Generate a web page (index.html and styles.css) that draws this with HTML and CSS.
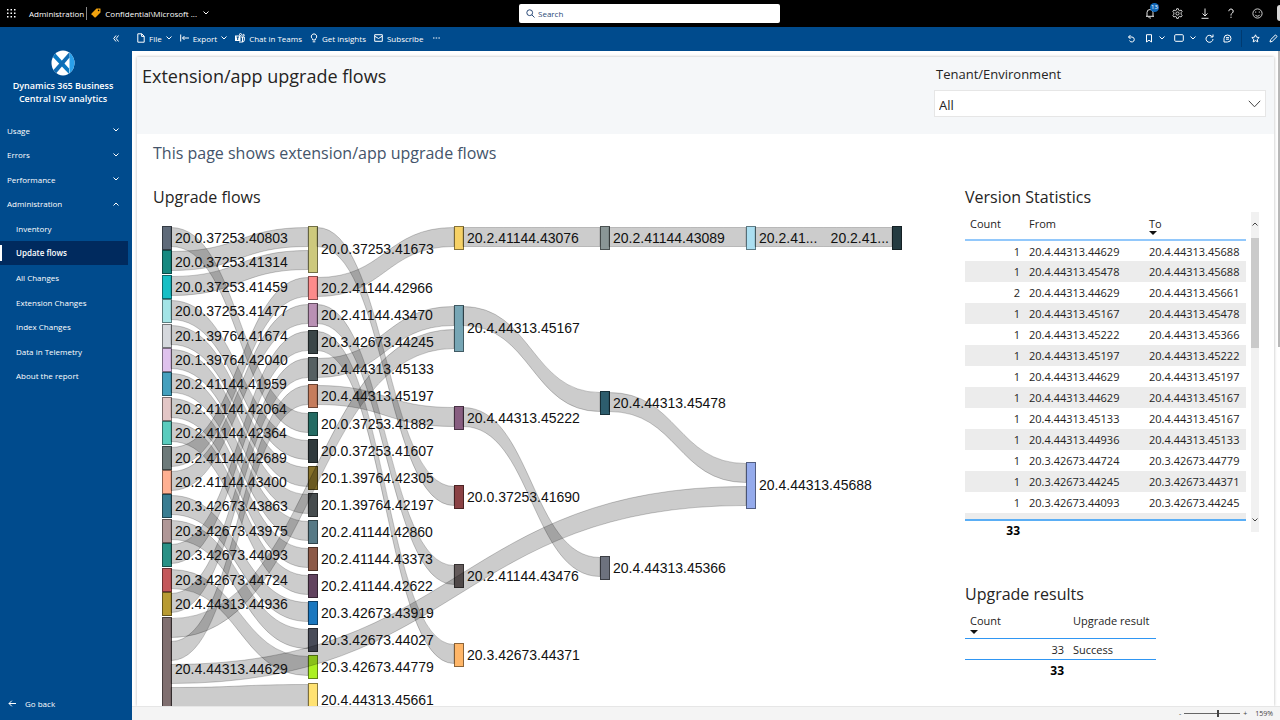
FILE: index.html
```html
<!DOCTYPE html>
<html lang="en">
<head>
<meta charset="utf-8">
<title>Extension/app upgrade flows</title>
<link rel="stylesheet" href="styles.css">
</head>
<body>
<div class="app">
  <header class="topbar">
    <div class="topbar-left">
      <button class="icon-btn" aria-label="Apps">
        <svg width="9" height="9" viewBox="0 0 9 9" fill="#fff"><path d="M0 0h1.500v1.500H0zM3.500 0H5v1.500H3.500zM7 0h1.500v1.500H7zM0 3.500h1.500V5H0zM3.500 3.500H5V5H3.500zM7 3.500h1.500V5H7zM0 7h1.500v1.500H0zM3.500 7H5v1.500H3.500zM7 7h1.500v1.500H7z"/></svg>
      </button>
      <span class="workspace">Administration</span>
      <span class="divider"></span>
      <button class="label-btn">
        <svg width="10" height="10" viewBox="0 0 10 10"><path d="M5.500.5H9.300L9.500 1v3.500L4.500 9.500h-.8L.5 6.300v-.8z" fill="#f2a30f"/><circle cx="7.600" cy="2.400" r=".8" fill="#000"/></svg>
        <span>Confidential\Microsoft ...</span>
        <svg class="chev" width="6" height="4" viewBox="0 0 6 4"><path d="M.5.5 3 3 5.500.5"/></svg>
      </button>
    </div>
    <label class="search">
      <svg width="9" height="9" viewBox="0 0 9 9" fill="none" stroke="#2b4a78"><circle cx="3.700" cy="3.700" r="2.900"/><path d="M5.800 5.800 8.500 8.500"/></svg>
      <input type="text" placeholder="Search" aria-label="Search">
    </label>
    <div class="topbar-right">
      <button class="icon-btn bell" aria-label="Notifications">
        <svg width="10" height="11" viewBox="0 0 10 11" fill="none" stroke="#fff" stroke-width=".9"><path d="M1 8.300h8M2 8.300V4.500a3 3 0 0 1 6 0v3.800M4 8.500a1 1 0 0 0 2 1"/></svg>
        <span class="badge">13</span>
      </button>
      <button class="icon-btn" aria-label="Settings">
        <svg width="11" height="11" viewBox="0 0 11 11" fill="none" stroke="#fff" stroke-width=".8"><path d="M4.700.7h1.600l.4 1.500 1 .5L9.100 2l1 1.500-1 1.200v1.500l1 1.200-1 1.600-1.400-.6-1 .5-.4 1.500H4.700l-.4-1.500-1-.5L1.900 9l-1-1.600 1-1.200V4.700l-1-1.200 1-1.500 1.400.7 1-.5z"/><circle cx="5.500" cy="5.500" r="1.600"/></svg>
      </button>
      <button class="icon-btn" aria-label="Download">
        <svg width="10" height="11" viewBox="0 0 10 11" fill="none" stroke="#fff" stroke-width=".9"><path d="M5 .5v7.300M2.500 5.500 5 8l2.500-2.500M1.500 10.300h7"/></svg>
      </button>
      <button class="icon-btn" aria-label="Help">
        <svg width="8" height="11" viewBox="0 0 8 11" fill="none" stroke="#fff" stroke-width="1"><path d="M1.800 3.200a2.200 2.200 0 1 1 3.500 1.800C4.300 5.800 4 6.200 4 7.500M4 8.700v1.200"/></svg>
      </button>
      <button class="icon-btn" aria-label="Feedback">
        <svg width="11" height="11" viewBox="0 0 11 11" fill="none" stroke="#fff" stroke-width=".8"><circle cx="5.500" cy="5.500" r="4.600"/><path d="M3.200 6.800a2.600 2.600 0 0 0 4.600 0M3.700 3.500v1.200M7.300 3.500v1.200"/></svg>
      </button>
      <span class="avatar"></span>
    </div>
  </header>

  <div class="shell">
    <aside class="sidebar">
      <button class="collapse" aria-label="Collapse navigation">
        <svg width="6" height="7" viewBox="0 0 6 7" fill="none" stroke="#fff"><path d="M3 .5.700 3.500 3 6.500M5.500.5 3.200 3.500 5.500 6.500"/></svg>
      </button>
      <div class="brand">
        <svg width="24" height="26" viewBox="0 0 24 26"><defs><clipPath id="logo"><ellipse cx="12" cy="13" rx="11.500" ry="12.500"/></clipPath></defs><g clip-path="url(#logo)"><path d="M0 0h24v26H0z" fill="#fff"/><path d="M16.500 0H24v26h-7.500l2-3V3z" fill="#2aa0ea"/><path d="M0 5 3 2 18 18.500V24z" fill="#0a78c2"/><path d="M18.500 2v5.500L5 23.500 2 20.500z" fill="#0f6cb4"/></g></svg>
        <h1>Dynamics 365 Business Central ISV analytics</h1>
      </div>
      <nav class="menu">
        <button class="group">Usage<svg class="chev" width="6" height="4" viewBox="0 0 6 4"><path d="M.5.5 3 3 5.500.5"/></svg></button>
        <button class="group">Errors<svg class="chev" width="6" height="4" viewBox="0 0 6 4"><path d="M.5.5 3 3 5.500.5"/></svg></button>
        <button class="group">Performance<svg class="chev" width="6" height="4" viewBox="0 0 6 4"><path d="M.5.5 3 3 5.500.5"/></svg></button>
        <button class="group">Administration<svg class="chev" width="6" height="4" viewBox="0 0 6 4"><path d="M.5 3.500 3 1l2.500 2.500"/></svg></button>
        <a href="#">Inventory</a>
        <a href="#" class="active" aria-current="page">Update flows</a>
        <a href="#">All Changes</a>
        <a href="#">Extension Changes</a>
        <a href="#">Index Changes</a>
        <a href="#">Data in Telemetry</a>
        <a href="#">About the report</a>
      </nav>
      <a href="#" class="back"><svg width="8" height="7" viewBox="0 0 8 7" fill="none" stroke="#fff"><path d="M8 3.500H1M3.800.7 1 3.500l2.800 2.800"/></svg>Go back</a>
    </aside>

    <main class="main">
      <div class="toolbar">
        <div class="tools">
          <button><svg width="8" height="10" viewBox="0 0 8 10"><path d="M.8.800h4l2.400 2.400v6H.800zM4.600.8v2.600h2.600"/></svg>File<svg class="chev" width="6" height="4" viewBox="0 0 6 4"><path d="M.5.5 3 3 5.500.5"/></svg></button>
          <button><svg width="9" height="8" viewBox="0 0 9 8"><path d="M.7.500v7M9 4H2.500M4.500 2 2.500 4l2 2"/></svg>Export<svg class="chev" width="6" height="4" viewBox="0 0 6 4"><path d="M.5.5 3 3 5.500.5"/></svg></button>
          <button><svg width="10" height="10" viewBox="0 0 10 10"><path d="M0 2.500h5.500V8H0z" fill="#fff" stroke="none"/><path d="M1.500 4H4M2.700 4v3" stroke="#004b8d"/><circle cx="5.500" cy="1.500" r="1"/><circle cx="8.500" cy="2.200" r=".8"/><path d="M6 4h3.300v3a2 2 0 0 1-2 2H4M7.500 4v5"/></svg>Chat in Teams</button>
          <button><svg width="8" height="10" viewBox="0 0 8 10"><path d="M2.700 7V6A2.700 2.700 0 1 1 5.300 6v1zM2.700 8.800h2.600"/></svg>Get insights</button>
          <button><svg width="9" height="8" viewBox="0 0 9 8"><path d="M.7.700h7.600v6.600H.7zM.7 2.200 4.500 4.500l3.800-2.300"/></svg>Subscribe</button>
          <button class="more" aria-label="More"><svg width="7" height="2" viewBox="0 0 7 2"><path d="M0 1h1.500M2.700 1h1.500M5.400 1h1.500"/></svg></button>
        </div>
        <div class="tools tools-right">
          <button aria-label="Reset"><svg width="9" height="9" viewBox="0 0 9 9"><path d="M3.500 1 1.500 3l2 2M1.500 3H5a2.500 2.500 0 1 1-2.500 3.500"/></svg></button>
          <button aria-label="Bookmarks"><svg width="8" height="9" viewBox="0 0 8 9"><path d="M1.500.7h5v7.300L4 6.200 1.500 8z"/></svg><svg class="chev" width="6" height="4" viewBox="0 0 6 4"><path d="M.5.5 3 3 5.500.5"/></svg></button>
          <button aria-label="View"><svg width="10" height="8" viewBox="0 0 10 8"><rect x=".7" y=".7" width="8.600" height="6.600" rx="1"/></svg><svg class="chev" width="6" height="4" viewBox="0 0 6 4"><path d="M.5.5 3 3 5.500.5"/></svg></button>
          <button aria-label="Refresh"><svg width="9" height="9" viewBox="0 0 9 9"><path d="M7.500 3A3.500 3.500 0 1 0 8 5M8 .5V3H5.500"/></svg></button>
          <button aria-label="Comments"><svg width="9" height="9" viewBox="0 0 9 9"><path d="M1 8V4.300A3.500 3.500 0 1 1 4.500 8zM3 3.600h3M3 5.200h3"/></svg></button>
          <span class="tool-sep"></span>
          <button aria-label="Favorite"><svg width="9" height="9" viewBox="0 0 9 9"><path d="m4.500.8 1.100 2.400 2.600.3-1.900 1.800.5 2.600-2.300-1.300-2.300 1.300.5-2.600L.8 3.500l2.600-.3z"/></svg></button>
          <button aria-label="Edit"><svg width="9" height="9" viewBox="0 0 9 9"><path d="M1 8l.6-2.300L6.500.9l1.600 1.600-4.900 4.900z"/></svg></button>
        </div>
      </div>

      <div class="canvas">
        <section class="report">
          <div class="report-head">
            <h2 class="report-title">Extension/app upgrade flows</h2>
            <div class="slicer">
              <label for="tenant">Tenant/Environment</label>
              <div class="select-box">
                <select id="tenant"><option>All</option></select>
                <svg width="13" height="8" viewBox="0 0 13 8" fill="none" stroke="#444"><path d="m.8.800 5.700 6 5.700-6"/></svg>
              </div>
            </div>
          </div>
          <p class="intro">This page shows extension/app upgrade flows</p>
          <div class="columns">
            <section class="flows">
              <h3>Upgrade flows</h3>
              <svg id="sankey" class="sankey" width="750" height="520" viewBox="0 0 750 520" role="img" aria-label="Upgrade flows"></svg>
            </section>
            <section class="side">
              <h3>Version Statistics</h3>
              <div class="stats">
                <div class="stats-main">
                  <div class="stats-clip">
                    <table class="grid versions">
                      <thead><tr><th class="c-count">Count</th><th class="c-from">From</th><th>To<i class="sort"></i></th></tr></thead>
                      <tbody>
                        <tr><td>1</td><td>20.4.44313.44629</td><td>20.4.44313.45688</td></tr>
                        <tr><td>1</td><td>20.4.44313.45478</td><td>20.4.44313.45688</td></tr>
                        <tr><td>2</td><td>20.4.44313.44629</td><td>20.4.44313.45661</td></tr>
                        <tr><td>1</td><td>20.4.44313.45167</td><td>20.4.44313.45478</td></tr>
                        <tr><td>1</td><td>20.4.44313.45222</td><td>20.4.44313.45366</td></tr>
                        <tr><td>1</td><td>20.4.44313.45197</td><td>20.4.44313.45222</td></tr>
                        <tr><td>1</td><td>20.4.44313.44629</td><td>20.4.44313.45197</td></tr>
                        <tr><td>1</td><td>20.4.44313.44629</td><td>20.4.44313.45167</td></tr>
                        <tr><td>1</td><td>20.4.44313.45133</td><td>20.4.44313.45167</td></tr>
                        <tr><td>1</td><td>20.4.44313.44936</td><td>20.4.44313.45133</td></tr>
                        <tr><td>1</td><td>20.3.42673.44724</td><td>20.3.42673.44779</td></tr>
                        <tr><td>1</td><td>20.3.42673.44245</td><td>20.3.42673.44371</td></tr>
                        <tr><td>1</td><td>20.3.42673.44093</td><td>20.3.42673.44245</td></tr>
                        <tr><td></td><td></td><td></td></tr>
                      </tbody>
                    </table>
                  </div>
                  <div class="total">33</div>
                </div>
                <div class="scroll">
                  <svg width="6" height="4" viewBox="0 0 6 4"><path d="M.5 3.500 3 1l2.500 2.500"/></svg>
                  <span class="thumb"></span>
                  <svg width="6" height="4" viewBox="0 0 6 4"><path d="M.5.5 3 3 5.500.5"/></svg>
                </div>
              </div>
              <h3 class="results-title">Upgrade results</h3>
              <table class="grid results">
                <thead><tr><th class="c-num">Count<i class="sort"></i></th><th>Upgrade result</th></tr></thead>
                <tbody><tr><td>33</td><td>Success</td></tr></tbody>
                <tfoot><tr><td>33</td><td></td></tr></tfoot>
              </table>
            </section>
          </div>
        </section>
        <span class="page-thumb"></span>
      </div>

      <footer class="status">
        <button aria-label="Zoom out">-</button>
        <input type="range" min="0" max="100" value="60" aria-label="Zoom">
        <button aria-label="Zoom in">+</button>
        <span class="zoom">159%</span>
      </footer>
    </main>
  </div>
</div>
<script src="sankey.js"></script>
</body>
</html>
```
FILE: styles.css
```css
* { box-sizing: border-box; }
body {
  margin: 0;
  font-family: "Open Sans", "Noto Sans", sans-serif;
  font-size: 8px;
  color: #252423;
}
h1, h2, h3, p { margin: 0; font-weight: 400; }
svg { display: block; flex: none; }
button {
  margin: 0; padding: 0; border: 0; background: none;
  font: inherit; color: inherit; cursor: pointer;
}
a { color: inherit; text-decoration: none; }
.chev { fill: none; stroke: #fff; stroke-width: 1; }

.app { display: flex; flex-direction: column; height: 100vh; overflow: hidden; }

/* Top bar */
.topbar {
  display: grid; grid-template-columns: 519fr 261px 500fr; align-items: center;
  height: 27px; flex: none; background: #000; color: #fff; padding-bottom: 1px;
}
.topbar-left { display: flex; align-items: center; padding-left: 7px; }
.topbar-left .workspace { margin-left: 13px; }
.divider { width: 1px; height: 13px; margin: 0 4px 0 2px; background: #888; }
.label-btn { display: flex; align-items: center; gap: 4px; }
.label-btn .chev { margin-left: 2px; }
.search {
  display: flex; align-items: center; gap: 3px; height: 19px; padding: 0 7px;
  background: #fff; border-radius: 2px;
}
.search input {
  flex: 1; min-width: 0; padding: 0; border: 0; outline: 0; background: none; font: inherit;
}
.search input::placeholder { color: #2b4a78; opacity: 1; }
.topbar-right { display: flex; align-items: center; justify-content: flex-end; gap: 17px; overflow: hidden; height: 26px; }
.icon-btn { position: relative; }
.badge {
  position: absolute; left: 5px; top: -5px; width: 9px; height: 9px; border-radius: 5px;
  background: #1067b8; font-size: 6px; line-height: 9px; text-align: center;
}
.avatar { width: 3px; height: 16px; border-radius: 8px 0 0 8px; background: #d8d8d8; margin-left: -3px; }

.shell { display: flex; flex: 1; min-height: 0; }

/* Sidebar */
.sidebar {
  display: flex; flex-direction: column; width: 132px; flex: none;
  background: #004b8d; color: #fff; padding-bottom: 8px;
}
.collapse { align-self: flex-end; padding: 8px 13px 0 0; }
.brand { padding: 8px 10px 0 4px; text-align: center; }
.brand svg { margin: 0 auto 3px; }
.brand h1 { font-size: 9px; line-height: 13px; font-weight: 600; padding: 0 4px; }
.menu { display: grid; grid-auto-rows: 1fr; height: 270px; margin: 13px 4px 0 0; }
.menu > * { display: flex; align-items: center; padding-left: 16px; }
.menu .group { justify-content: space-between; padding: 0 9px 0 7px; }
.menu .active { background: #002a5e; font-weight: 600; box-shadow: inset 0 4px #002a5e, inset 0 -4px #002a5e, inset 2px 0 #fff; }
.back { display: flex; align-items: center; gap: 9px; margin-top: auto; padding-left: 8px; line-height: 17px; }

/* Toolbar */
.main { display: flex; flex-direction: column; flex: 1; min-width: 0; }
.toolbar {
  display: flex; justify-content: space-between; height: 24px; flex: none;
  padding: 0 0 2px 5px; background: #004b8d; color: #fff;
}
.tools { display: flex; align-items: center; gap: 8px; }
.tools button { display: flex; align-items: center; gap: 4px; }
.tools .more { margin-left: 2px; }
.tools svg { fill: none; stroke: #fff; stroke-width: 1; }
.tools-right { gap: 9px; padding-right: 2px; }
.tools-right button { gap: 6px; }
.tool-sep { width: 1px; height: 17px; background: #003a70; }

/* Report */
.canvas {
  position: relative; flex: 1; min-height: 0; padding: 6px 6px 0 5px;
  background: #fff; overflow: hidden; display: flex;
}
.page-thumb { position: absolute; right: 0; top: 0; width: 2px; height: 296px; background: #b8b8b8; }
.report { flex: 1; min-width: 0; overflow: hidden; background: #fff; box-shadow: 0 0 3px #b8b8b8; }
.report-head {
  display: flex; justify-content: space-between; height: 77px; padding: 0 8px 0 5px;
  background: #f5f7f9;
}
.report-title { font-size: 18px; line-height: 39px; }
.slicer { width: 332px; padding-top: 6px; }
.slicer label { display: block; font-size: 13px; line-height: 22px; padding-left: 2px; }
.select-box {
  display: grid; grid-template-columns: 1fr auto; align-items: center; margin-top: 5px;
  border: 1px solid #e6e6e6; background: #fff; height: 27px; padding-right: 4px;
}
.select-box select, .select-box svg { grid-row: 1; }
.select-box select {
  grid-column: 1 / 3; appearance: none; border: 0; background: none; width: 100%;
  height: 25px; padding: 2px 4px 0; font: inherit; font-size: 13px; color: #252423;
}
.select-box svg { grid-column: 2; pointer-events: none; }
.intro { font-size: 16px; line-height: 38px; padding-left: 16px; color: #44546a; }
.columns {
  display: flex; justify-content: space-between; padding: 10px 14px 0 16px;
}
.columns h3 { font-size: 16px; line-height: 30px; }
.flows { flex: 1; min-width: 0; overflow: hidden; }
.sankey { margin: 10px 0 0 7px; font-family: "Liberation Sans", Arial, sans-serif; font-size: 14px; }
.sankey text { fill: #111; }
.sankey .link { fill: #000; fill-opacity: .2; stroke: #000; stroke-opacity: .2; }
.side { width: 295px; flex: none; }
.stats { display: flex; gap: 5px; }
.stats-main { width: 281px; }
.stats-clip { height: 309px; overflow: hidden; border-bottom: 2px solid #5aaef5; }

.grid { border-collapse: collapse; font-size: 11px; table-layout: fixed; }
.grid th, .grid td { padding: 0; text-align: left; font-weight: 400; line-height: 15px; white-space: nowrap; }
.grid th { position: relative; vertical-align: top; }
.grid td:first-child { text-align: right; padding-right: 9px; }
.grid th:first-child { padding-left: 5px; }
.sort { position: absolute; bottom: 4px; border: 4px solid transparent; border-top-color: #111; border-bottom: 0; }
.grid th .sort { left: 0; }
.grid th:first-child .sort { left: 5px; }

.versions { width: 281px; }
.versions th { height: 28px; padding-top: 4px; border-bottom: 2px solid #92c8fb; }
.c-count { width: 64px; }
.c-from { width: 120px; }
.versions td { height: 21px; }
.versions tbody tr:nth-child(even) { background: #ececec; }
.total { width: 55px; text-align: right; font-size: 12px; line-height: 20px; font-weight: 700; color: #000; }
.scroll {
  display: flex; flex-direction: column; align-items: center; width: 8px; height: 320px;
  padding: 10px 0; background: #f1f1f1;
}
.scroll svg { fill: none; stroke: #444; }
.thumb { width: 8px; height: 110px; margin: 12px 0 auto; background: #cacaca; }

.columns .results-title { margin-top: 38px; }
.results { width: 191px; }
.results th { height: 29px; padding-top: 4px; border-bottom: 1px solid #2f96f3; }
.c-num { width: 108px; }
.results tbody td { height: 21px; padding-top: 2px; border-bottom: 1px solid #2f96f3; }
.results tfoot td { height: 22px; font-size: 12px; font-weight: 700; color: #000; }

/* Status bar */
.status {
  display: flex; align-items: center; justify-content: flex-end; gap: 3px;
  height: 14px; flex: none; padding-right: 7px; background: #f4f4f4;
  border-top: 1px solid #e6e6e6; color: #444; font-size: 7px;
}
.status input { appearance: none; width: 56px; height: 8px; margin: 0; background: linear-gradient(#666, #666) center / 100% 1px no-repeat; }
.status input::-webkit-slider-thumb { appearance: none; width: 2px; height: 7px; background: #444; }
.zoom { margin-left: 5px; }
```
FILE: sankey.js
```js
const NS = 'http://www.w3.org/2000/svg';
const COLUMN = 146, NODE_W = 9, UNIT = 23, BAND = 19;

// Each node: column, top, units, colour, label
const nodes = {};
const addNode = (id, column, top, units, color, label) => {
  nodes[id] = { x: 2 + column * COLUMN, y: top, h: UNIT * units, color, label: label || id, end: column === 5 };
};

const first = [
  ['20.0.37253.40803', '#5f6b7a'], ['20.0.37253.41314', '#168980'], ['20.0.37253.41459', '#17bfc5'],
  ['20.0.37253.41477', '#a3e4e6'], ['20.1.39764.41674', '#d5d8dd'], ['20.1.39764.42040', '#dfc2ed'],
  ['20.2.41144.41959', '#45a0be'], ['20.2.41144.42064', '#e3c6c6'], ['20.2.41144.42364', '#5accbe'],
  ['20.2.41144.42689', '#6d7a7a'], ['20.2.41144.43400', '#ffb092'], ['20.3.42673.43863', '#397d92'],
  ['20.3.42673.43975', '#b09797'], ['20.3.42673.44093', '#2a9186'], ['20.3.42673.44724', '#c4585b'],
  ['20.4.44313.44936', '#b89b33']
];
first.forEach(([id, color], i) => addNode(id, 0, 4 + Math.round(i * 24.4), 1, color));
addNode('20.4.44313.44629', 0, 395, 5, '#806f70');
nodes['20.4.44313.44629'].labelY = 447;

addNode('20.0.37253.41673', 1, 4, 2, '#cdc97d');
const second = [
  ['20.2.41144.42966', '#fc8b8b'], ['20.2.41144.43470', '#b990b4'], ['20.3.42673.44245', '#3b4648'],
  ['20.4.44313.45133', '#566062'], ['20.4.44313.45197', '#c57c5c'], ['20.0.37253.41882', '#246b63'],
  ['20.0.37253.41607', '#303a3d'], ['20.1.39764.42305', '#857029'], ['20.1.39764.42197', '#464c4e'],
  ['20.2.41144.42860', '#567986'], ['20.2.41144.43373', '#8c5947'], ['20.2.41144.42622', '#62435f'],
  ['20.3.42673.43919', '#1a77bf'], ['20.3.42673.44027', '#484c59'], ['20.3.42673.44779', '#acf022']
];
second.forEach(([id, color], i) => addNode(id, 1, 54 + Math.round(i * 27.1), 1, color));
addNode('20.4.44313.45661', 1, 461, 2, '#ffe272');
nodes['20.4.44313.45661'].labelY = 478;

addNode('20.2.41144.43076', 2, 4, 1, '#f6d166');
addNode('20.4.44313.45167', 2, 83, 2, '#77a6b5');
addNode('20.4.44313.45222', 2, 184, 1, '#875d80');
addNode('20.0.37253.41690', 2, 263, 1, '#8a4144');
addNode('20.2.41144.43476', 2, 342, 1, '#635a5a');
addNode('20.3.42673.44371', 2, 421, 1, '#ffb668');
addNode('20.2.41144.43089', 3, 4, 1, '#8a9696');
addNode('20.4.44313.45478', 3, 169, 1, '#2d5d6d');
addNode('20.4.44313.45366', 3, 334, 1, '#6d727e');
addNode('next', 4, 4, 1, '#abdff1', '20.2.41...');
addNode('20.4.44313.45688', 4, 240, 2, '#95abec');
addNode('last', 5, 4, 1, '#243b41', '20.2.41...');

// Each link: source, target, source slot, target slot, units
const links = [
  ['20.0.37253.40803', '20.0.37253.41882'],
  ['20.0.37253.41314', '20.0.37253.41673'],
  ['20.0.37253.41459', '20.0.37253.41673', 0, 1],
  ['20.0.37253.41477', '20.0.37253.41607'],
  ['20.1.39764.41674', '20.1.39764.42305'],
  ['20.1.39764.42040', '20.1.39764.42197'],
  ['20.2.41144.41959', '20.2.41144.42860'],
  ['20.2.41144.42064', '20.2.41144.43373'],
  ['20.2.41144.42364', '20.2.41144.42622'],
  ['20.2.41144.42689', '20.2.41144.42966'],
  ['20.2.41144.43400', '20.2.41144.43470'],
  ['20.3.42673.43863', '20.3.42673.43919'],
  ['20.3.42673.43975', '20.3.42673.44027'],
  ['20.3.42673.44093', '20.3.42673.44245'],
  ['20.3.42673.44724', '20.3.42673.44779'],
  ['20.4.44313.44936', '20.4.44313.45133'],
  ['20.4.44313.44629', '20.4.44313.45167', 0, 1],
  ['20.4.44313.44629', '20.4.44313.45197', 1, 0],
  ['20.4.44313.44629', '20.4.44313.45688', 2, 1],
  ['20.4.44313.44629', '20.4.44313.45661', 3, 0, 2],
  ['20.0.37253.41673', '20.0.37253.41690'],
  ['20.2.41144.42966', '20.2.41144.43076'],
  ['20.2.41144.43470', '20.2.41144.43476'],
  ['20.3.42673.44245', '20.3.42673.44371'],
  ['20.4.44313.45133', '20.4.44313.45167'],
  ['20.4.44313.45197', '20.4.44313.45222'],
  ['20.2.41144.43076', '20.2.41144.43089'],
  ['20.4.44313.45167', '20.4.44313.45478'],
  ['20.4.44313.45222', '20.4.44313.45366'],
  ['20.2.41144.43089', 'next'],
  ['20.4.44313.45478', '20.4.44313.45688'],
  ['next', 'last']
];

const svg = document.getElementById('sankey');
const draw = (tag, attrs, text) => {
  const el = document.createElementNS(NS, tag);
  for (const key in attrs) el.setAttribute(key, attrs[key]);
  if (text) el.textContent = text;
  svg.appendChild(el);
};

Object.values(nodes).forEach(n => draw('rect', {
  x: n.x + 0.5, y: n.y + 0.5, width: NODE_W, height: n.h,
  fill: n.color, stroke: `color-mix(in srgb, ${n.color} 55%, black)`
}));

links.forEach(([from, to, a = 0, b = 0, units = 1]) => {
  const s = nodes[from], t = nodes[to];
  const x0 = s.x + NODE_W, x1 = t.x, mid = (x0 + x1) / 2;
  const y0 = s.y + 1.5 + a * UNIT, y1 = t.y + 1.5 + b * UNIT;
  const h = BAND + (units - 1) * UNIT;
  draw('path', {
    class: 'link',
    d: `M${x0} ${y0}C${mid} ${y0} ${mid} ${y1} ${x1} ${y1}V${y1 + h}C${mid} ${y1 + h} ${mid} ${y0 + h} ${x0} ${y0 + h}Z`
  });
});

Object.values(nodes).forEach(n => draw('text', {
  x: n.end ? n.x - 3 : n.x + NODE_W + 4,
  y: (n.labelY || n.y + n.h / 2) + 5,
  'text-anchor': n.end ? 'end' : 'start'
}, n.label));
```
